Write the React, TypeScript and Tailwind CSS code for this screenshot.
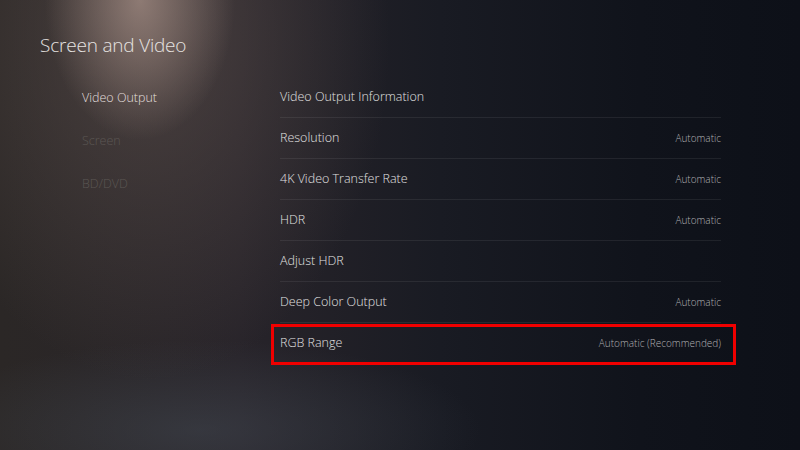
const nav = [
  { label: 'Video Output', active: true },
  { label: 'Screen', active: false },
  { label: 'BD/DVD', active: false },
]

const rows = [
  { label: 'Video Output Information', value: '' },
  { label: 'Resolution', value: 'Automatic' },
  { label: '4K Video Transfer Rate', value: 'Automatic' },
  { label: 'HDR', value: 'Automatic' },
  { label: 'Adjust HDR', value: '' },
  { label: 'Deep Color Output', value: 'Automatic' },
  { label: 'RGB Range', value: 'Automatic (Recommended)', marked: true },
]

export default function App() {
  return (
    <div className="relative w-[800px] h-[450px] overflow-hidden font-['Open_Sans',sans-serif] bg-[#10131b] bg-[radial-gradient(ellipse_95px_140px_at_140px_0px,rgba(180,155,145,0.65),transparent),radial-gradient(ellipse_240px_340px_at_150px_40px,rgba(95,82,78,0.6),transparent),radial-gradient(ellipse_280px_90px_at_200px_430px,rgba(70,78,88,0.45),transparent),linear-gradient(90deg,#2b2726_0%,#28242a_30%,#191b23_55%,#10131b_80%,#0d1018_100%)]">
      {/* header */}
      <div className="pl-[40px] pt-[32px] h-[77px]">
        <h1 className="text-[19px] leading-[26px] font-light text-[#e6e3e1] tracking-[-0.2px]">Screen and Video</h1>
      </div>

      <div className="flex">
        {/* side menu */}
        <div className="w-[280px] pl-[82px] flex flex-col">
          {nav.map((n) => (
            <div
              key={n.label}
              className={`h-[43px] flex items-center text-[12.5px] font-light ${n.active ? 'text-[#e2dfdd]' : 'text-[#5b5653]'}`}
            >
              {n.label}
            </div>
          ))}
        </div>

        {/* settings list */}
        <div className="w-[441px] flex flex-col">
          {rows.map((r, i) => (
            <div
              key={r.label}
              className={`relative h-[41px] flex items-center justify-between ${i < rows.length - 1 ? 'border-b border-white/[0.07]' : ''}`}
            >
              <span className="text-[12.5px] font-light text-[#e0e0e0]">{r.label}</span>
              <span className="text-[10px] font-light text-[#b0b0b2]">{r.value}</span>
              {r.marked && (
                <span className="absolute -left-[9px] -right-[15px] top-[1px] -bottom-[1px] border-[3px] border-[#f00000]" />
              )}
            </div>
          ))}
        </div>
      </div>
    </div>
  )
}
